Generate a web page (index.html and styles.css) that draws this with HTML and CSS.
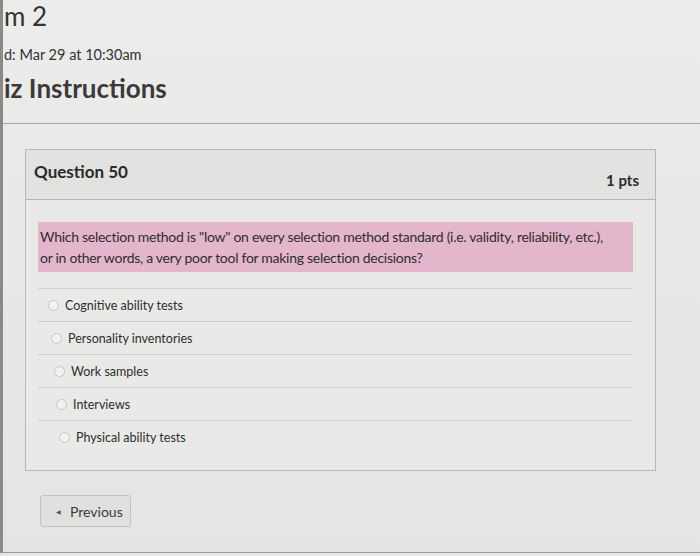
FILE: index.html
```
<!DOCTYPE html>
<html>
	<head>
		<meta charset="UTF-8">
		<title>Quiz</title>
		<link rel="stylesheet" href="styles.css">
	</head>
	<body>
		<div class="page">
			<div class="head">
				<h1 class="title">m 2</h1>
				<div class="due">d: Mar 29 at 10:30am</div>
				<h2 class="instr">iz Instructions</h2>
			</div>
			<div class="card">
				<div class="card-top">
					<div class="qname">Question 50</div>
					<div class="pts">1 pts</div>
				</div>
				<div class="card-body">
					<p class="qtext">Which selection method is "low" on every selection method standard (i.e. validity, reliability, etc.), or in other words, a very poor tool for making selection decisions?</p>
					<ul class="answers">
						<li><span class="radio"></span>Cognitive ability tests</li>
						<li class="a2"><span class="radio"></span>Personality inventories</li>
						<li class="a3"><span class="radio"></span>Work samples</li>
						<li class="a4"><span class="radio"></span>Interviews</li>
						<li class="a5"><span class="radio"></span>Physical ability tests</li>
					</ul>
				</div>
			</div>
			<div class="nav">
				<button class="prev"><span class="tri">&#9664;</span>Previous</button>
			</div>
		</div>
	</body>
</html>
```

FILE: styles.css
```
* {
	margin: 0;
	padding: 0;
	box-sizing: border-box;
}

body {
	background-color: #e6e6e4;
	font-family: Lato, "Liberation Sans", sans-serif;
	color: #2d3b45;
	width: 700px;
	height: 556px;
	overflow: hidden;
}

.page {
	height: 553px;
	border-left: 3px solid #8a8a88;
	border-bottom: 1px solid #9a9a98;
	background: linear-gradient(#ececeb, #e4e4e2);
}

.head {
	border-bottom: 1px solid #a9a9a7;
	height: 124px;
	padding-left: 1px;
}

.title {
	font-size: 26px;
	font-weight: 400;
	line-height: 32px;
	color: #333;
}

.due {
	font-size: 14.5px;
	margin-top: 14px;
	line-height: 18px;
	color: #333;
}

.instr {
	font-size: 26px;
	font-weight: 700;
	line-height: 32px;
	margin-top: 8px;
	color: #3a3a3a;
}

.card {
	margin: 25px 44px 0 22px;
	border: 1px solid #b8b8b6;
	background-color: #e9e9e7;
	height: 322px;
}

.card-top {
	display: flex;
	justify-content: space-between;
	height: 50px;
	background-color: #e2e2e0;
	border-bottom: 1px solid #b5b5b3;
	padding: 0 16px 0 8px;
}

.qname {
	font-size: 17px;
	font-weight: 700;
	padding-top: 11px;
	color: #2b2b2b;
}

.pts {
	font-size: 15px;
	font-weight: 700;
	padding-top: 21px;
	color: #2b2b2b;
}

.card-body {
	padding: 22px 22px 0 12px;
}

.qtext {
	background-color: #e4b6cb;
	font-size: 14px;
	line-height: 21px;
	letter-spacing: -0.28px;
	padding: 4px 20px 4px 2px;
	color: #2e2e2e;
	margin-bottom: 16px;
}

.answers {
	list-style: none;
}

.answers li {
	border-top: 1px solid #cfcfcd;
	height: 33px;
	display: flex;
	align-items: center;
	font-size: 12.5px;
	color: #2e2e2e;
	padding-left: 10px;
}

.answers .a2 { padding-left: 13px; }
.answers .a3 { padding-left: 16px; }
.answers .a4 { padding-left: 18px; }
.answers .a5 { padding-left: 21px; }

.radio {
	width: 11px;
	height: 11px;
	border: 1px solid #c4c4c2;
	border-radius: 50%;
	background-color: #f2f2f0;
	margin-right: 6px;
}

.nav {
	padding: 24px 0 0 37px;
}

.prev {
	width: 91px;
	height: 32px;
	background-color: #e0e0de;
	border: 1px solid #c2c2c0;
	border-radius: 3px;
	font-family: Lato, "Liberation Sans", sans-serif;
	font-size: 14px;
	color: #3b3b3b;
	display: flex;
	align-items: center;
	padding-left: 15px;
}

.tri {
	font-size: 6px;
	margin-right: 9px;
	color: #555;
}
```
